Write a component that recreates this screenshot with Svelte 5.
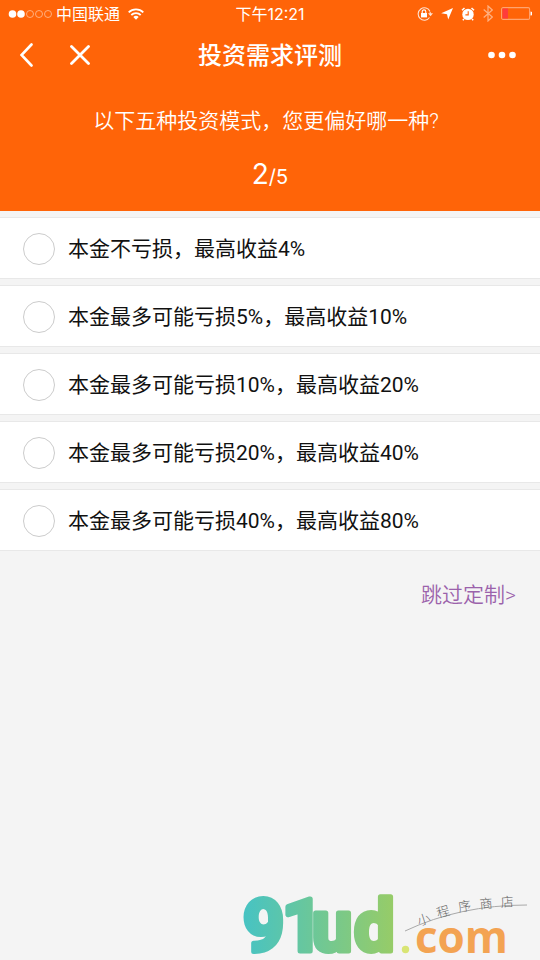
<script>
  const question = '以下五种投资模式，您更偏好哪一种?';
  const options = [
    '本金不亏损，最高收益4%',
    '本金最多可能亏损5%，最高收益10%',
    '本金最多可能亏损10%，最高收益20%',
    '本金最多可能亏损20%，最高收益40%',
    '本金最多可能亏损40%，最高收益80%'
  ];
  let selected = $state(null);
</script>

<div class="screen">
  <header>
    <div class="status">
      <div class="side">
        <svg width="44" height="10" viewBox="0 0 44 10" aria-hidden="true">
          <circle cx="4.500" cy="5" r="3.8" fill="#fff" />
          <circle cx="13" cy="5" r="3.8" fill="#fff" />
          <g fill="none" stroke="#ffc09a" stroke-width="0.8">
            <circle cx="22" cy="5" r="3.5" />
            <circle cx="31" cy="5" r="3.5" />
            <circle cx="40" cy="5" r="3.5" />
          </g>
        </svg>
        <span class="carrier">中国联通</span>
        <svg width="16" height="12" viewBox="0 0 16 12" aria-hidden="true">
          <g fill="none" stroke="#fff" stroke-width="1.8">
            <path d="M.7 4.3a10.4 10.4 0 0 1 14.6 0" />
            <path d="M3.3 7a6.6 6.6 0 0 1 9.4 0" />
          </g>
          <path d="M8 11.8 5.3 9a3.9 3.9 0 0 1 5.4 0z" fill="#fff" />
        </svg>
      </div>
      <time>下午12:21</time>
      <div class="side end">
        <svg width="16" height="14" viewBox="0 0 16 14" aria-hidden="true">
          <path d="M12.500 10.500A6.200 6.200 0 1 1 13 4.400M13.200 5v2" fill="none" stroke="#ffe2d1" stroke-width="1.1" />
          <path d="M11 6.200h5l-2.500 3z" fill="#ffe2d1" />
          <rect x="4" y="6" width="6" height="4.400" fill="#fff" />
          <path d="M5.200 6V4.700a1.800 1.800 0 0 1 3.600 0V6" fill="none" stroke="#fff" stroke-width="1.1" />
        </svg>
        <svg width="12" height="12" viewBox="0 0 12 12" aria-hidden="true">
          <path d="M12 0 7.200 11.600 6 6.200.2 5.200z" fill="#fff" />
        </svg>
        <svg width="14" height="14" viewBox="0 0 14 14" aria-hidden="true">
          <circle cx="7" cy="7.400" r="5.700" fill="#fff" />
          <path d="M1 3.300 3.500 1M13 3.300 10.500 1M3 12l-1.200 1.300M11 12l1.200 1.300" stroke="#fff" stroke-width="1.5" />
          <path d="M7.200 4.200v3.700H4.400" fill="none" stroke="#ff6408" stroke-width="1.1" />
        </svg>
        <svg width="10" height="17" viewBox="0 0 10 17" aria-hidden="true">
          <path d="M.7 4.500 9.300 12 5 16V1l4.300 4L.7 12.500" fill="none" stroke="#ffb182" stroke-width="1.2" />
        </svg>
        <svg width="31" height="13" viewBox="0 0 31 13" aria-hidden="true">
          <rect x=".6" y=".6" width="28" height="11.800" rx="1.500" fill="none" stroke="#ffa470" stroke-width="1.1" />
          <rect x="1.500" y="1.500" width="5.500" height="10" fill="#ff3b3b" />
          <path d="M29.500 4.500a2 2 0 0 1 0 4z" fill="#fff" />
        </svg>
      </div>
    </div>

    <nav>
      <div class="actions">
        <button aria-label="返回">
          <svg width="14" height="24" viewBox="0 0 14 24">
            <path d="M11.500 1.500 1.500 12l10 10.500" fill="none" stroke="#fff" stroke-width="2.6" stroke-linecap="round" />
          </svg>
        </button>
        <button aria-label="关闭">
          <svg width="20" height="20" viewBox="0 0 20 20">
            <path d="m1.500 1.500 17 17m0-17-17 17" stroke="#fff" stroke-width="2.8" stroke-linecap="round" />
          </svg>
        </button>
      </div>
      <h1>投资需求评测</h1>
      <div class="actions end">
        <button aria-label="更多">
          <svg width="28" height="8" viewBox="0 0 28 8" fill="#fff">
            <circle cx="3.500" cy="4" r="3.300" />
            <circle cx="14" cy="4" r="3.300" />
            <circle cx="24.500" cy="4" r="3.300" />
          </svg>
        </button>
      </div>
    </nav>

    <p class="question" id="question">{question}</p>
    <p class="progress"><span class="current">2</span>/5</p>
  </header>

  <main>
    <div class="options" role="radiogroup" aria-labelledby="question">
      {#each options as option, i}
        <label>
          <input type="radio" name="preference" value={i} bind:group={selected} />
          <span>{option}</span>
        </label>
      {/each}
    </div>
    <a class="skip" href="#skip">跳过定制&gt;</a>
  </main>

  <footer>
    <svg width="290" height="80" viewBox="0 0 290 80" role="img" aria-label="91ud.com 小程序商店">
      <defs>
        <linearGradient id="brand" gradientUnits="userSpaceOnUse" x1="0" y1="0" x2="154" y2="0">
          <stop offset="0" stop-color="#46c3c4" />
          <stop offset="1" stop-color="#98cc66" />
        </linearGradient>
      </defs>
      <text class="wordmark" x="1 40 70 112" y="71" fill="url(#brand)" stroke="url(#brand)">91ud</text>
      <circle cx="163.500" cy="69.500" r="3.700" fill="#d9e574" />
      <path d="M163 51Q218 25 285 25" fill="none" stroke="#a9a9a9" />
      <text class="domain" x="173" y="73">com</text>
      <text class="script" x="177 196 217 238 259" y="46 38 32 29 27" rotate="-18 -15 -10 -5 -4">小程序商店</text>
    </svg>
  </footer>
</div>

<style>
  :global(body) {
    margin: 0;
    background: #f4f4f4;
  }

  .screen {
    display: flex;
    flex-direction: column;
    min-height: 100vh;
    background: #f4f4f4;
    color: #111;
    font-family: Roboto, 'Noto Sans CJK SC', sans-serif;
  }

  header {
    padding-bottom: 14px;
    background: #ff6408;
    color: #fff;
    text-align: center;
  }

  .status,
  nav {
    display: grid;
    grid-template-columns: 1fr auto 1fr;
    align-items: center;
  }

  .status {
    height: 27px;
    padding: 0 8px;
    font-family: Inter, 'Noto Sans CJK SC', sans-serif;
    font-size: 16px;
    line-height: 24px;
  }

  .side {
    display: flex;
    align-items: center;
    gap: 8px;
  }

  .carrier {
    margin-left: -4px;
  }

  .end {
    justify-content: flex-end;
  }

  nav {
    height: 56px;
    padding: 0 20px;
  }

  .actions {
    display: flex;
    align-items: center;
    gap: 36px;
  }

  button {
    display: flex;
    padding: 0;
    border: 0;
    background: none;
    cursor: pointer;
  }

  .actions.end {
    margin-right: 4px;
  }

  h1 {
    margin: 0;
    padding-top: 2px;
    font-size: 24px;
    font-weight: 500;
    line-height: 36px;
  }

  p {
    margin: 0;
  }

  .question {
    padding: 22px 8px 0 0;
    font-size: 21px;
    font-weight: 350;
    line-height: 32px;
  }

  .progress {
    padding-top: 20px;
    font-family: Inter, sans-serif;
    font-size: 20px;
    line-height: 40px;
  }

  .current {
    font-size: 28px;
    line-height: 28px;
  }

  main {
    display: flex;
    flex: 1;
    flex-direction: column;
    padding-top: 6px;
  }

  .options {
    display: flex;
    flex-direction: column;
    gap: 6px;
  }

  label {
    display: flex;
    align-items: center;
    gap: 13px;
    padding: 15px 23px 13px;
    border: 1px solid #e8e8e8;
    border-width: 1px 0;
    background: #fff;
    font-size: 21px;
    line-height: 32px;
    cursor: pointer;
  }

  input {
    flex: none;
    width: 32px;
    height: 32px;
    margin: 0;
    border: 1px solid #ccc;
    border-radius: 50%;
    background: #fff;
    appearance: none;
  }

  input:checked {
    border: 10px solid #ff6408;
  }

  .skip {
    align-self: flex-end;
    margin: 28px 24px 0;
    color: #9b62ab;
    font-size: 21px;
    font-weight: 350;
    line-height: 32px;
    text-decoration: none;
  }

  footer {
    display: flex;
    justify-content: flex-end;
    padding-right: 8px;
  }

  footer svg {
    display: block;
    overflow: visible;
  }

  .wordmark {
    font-family: Roboto, sans-serif;
    font-size: 72px;
    font-weight: 700;
    stroke-width: 5px;
    stroke-linejoin: round;
  }

  .domain {
    fill: #f3a352;
    font-family: 'Open Sans', sans-serif;
    font-size: 44px;
    font-weight: 700;
  }

  .script {
    fill: #666;
    font-family: 'Noto Sans CJK SC', sans-serif;
    font-size: 13px;
    font-weight: 300;
  }
</style>
